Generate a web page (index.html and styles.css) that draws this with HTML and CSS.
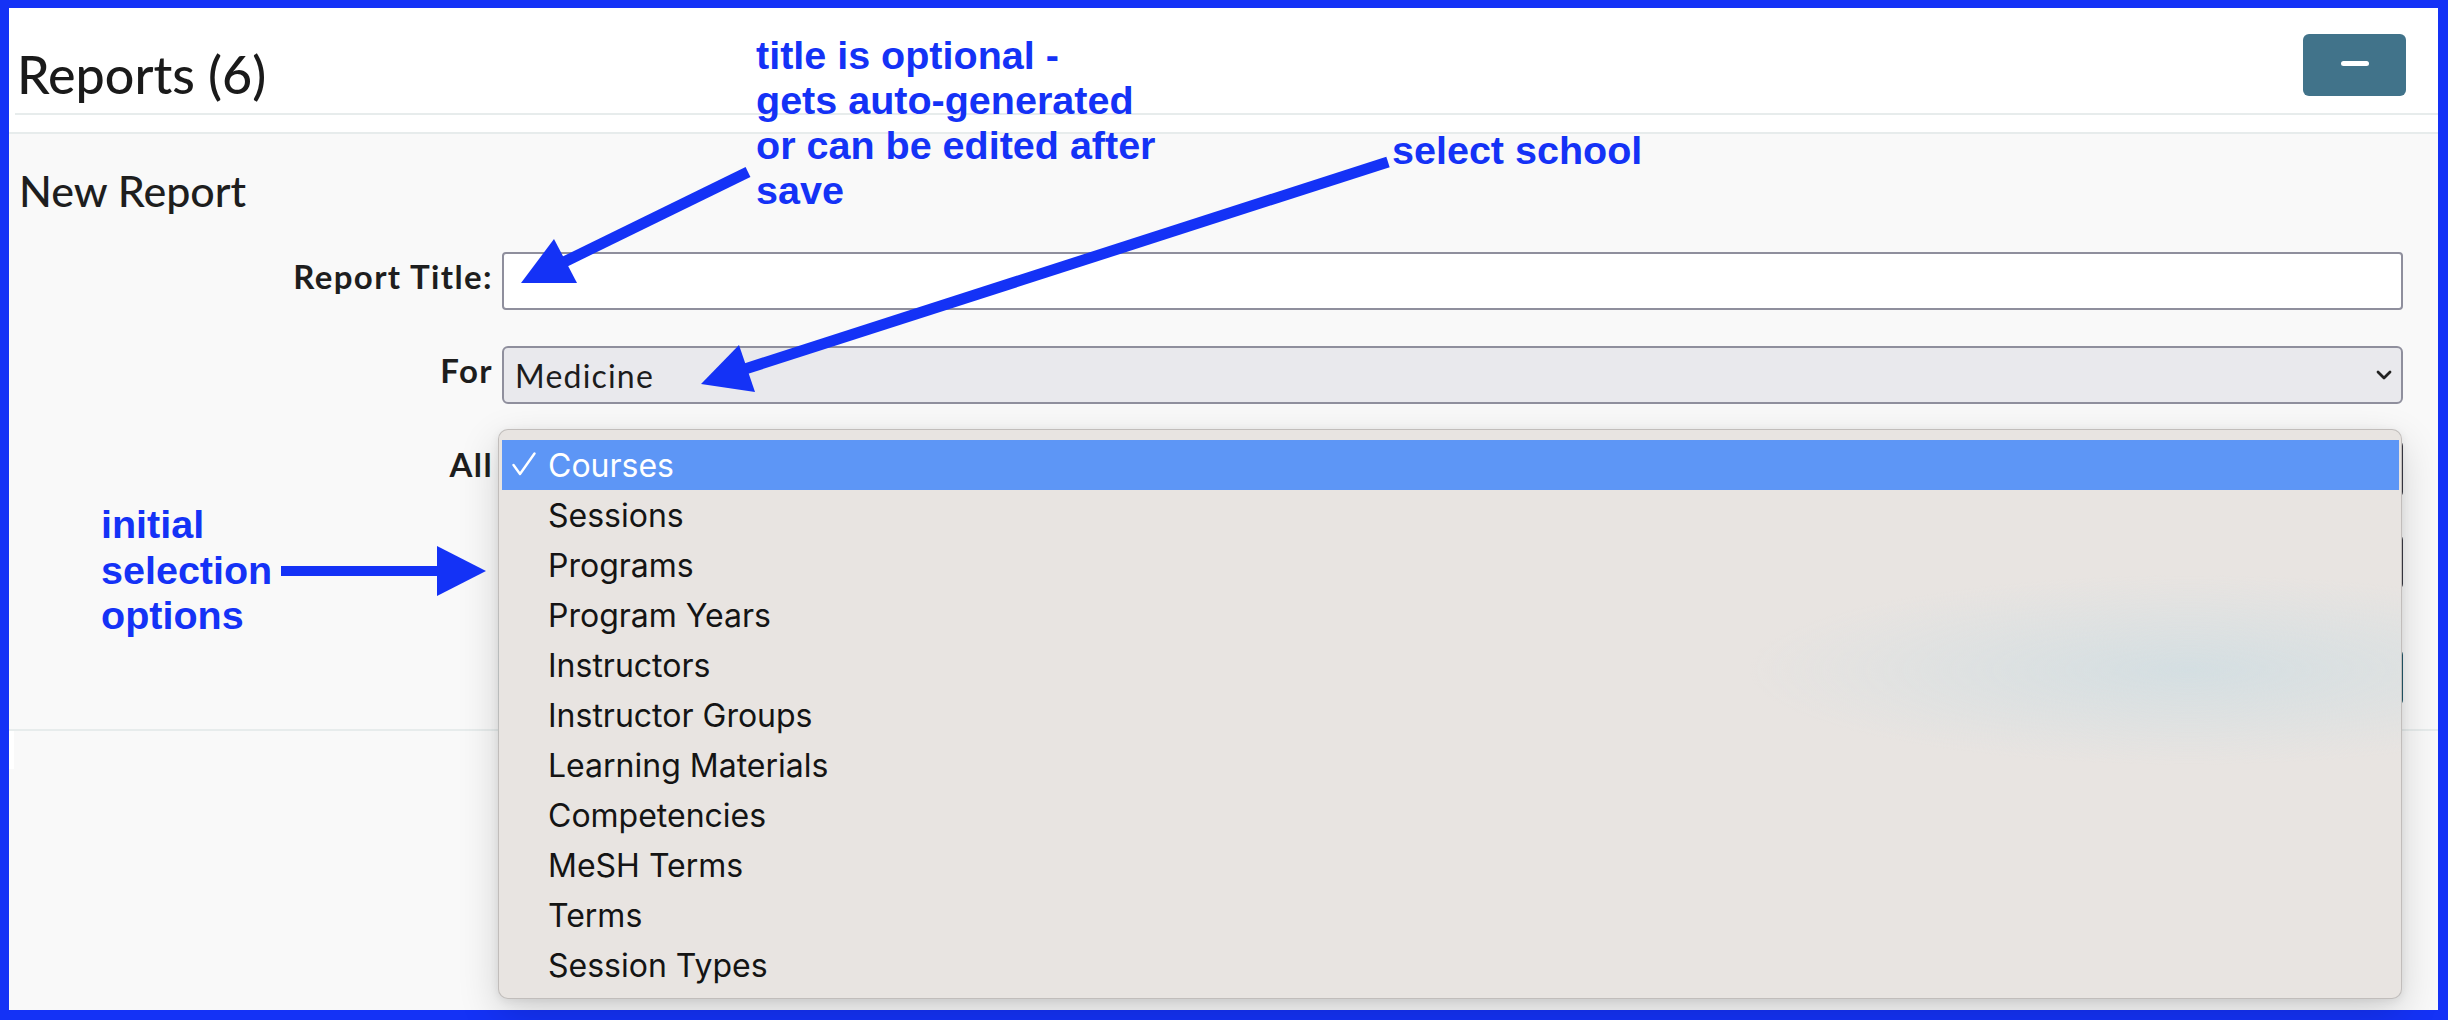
FILE: index.html
```html
<!DOCTYPE html>
<html lang="en">
<head>
<meta charset="utf-8">
<title>Reports</title>
<link rel="stylesheet" href="styles.css">
</head>
<body>
<div class="frame">
  <header class="head">
    <h1 class="title">Reports (6)</h1>
    <button class="collapse" type="button" aria-label="Collapse"><span class="minus"></span></button>
  </header>

  <section class="new-report">
    <h2 class="sub">New Report</h2>
    <div class="form">
      <label class="lbl">Report Title:</label>
      <div class="input"></div>

      <label class="lbl">For</label>
      <div class="select">
        <span class="val">Medicine</span>
        <svg class="chev" width="16" height="10" viewBox="0 0 16 10"><path d="M2 2 L8 8 L14 2" fill="none" stroke="#222" stroke-width="2.8" stroke-linecap="round" stroke-linejoin="round"/></svg>
      </div>

      <label class="lbl">All</label>
      <div class="field">
        <div class="select dark"></div>
        <div class="popup">
          <div class="opt sel"><span class="check"><svg width="24" height="24" viewBox="0 0 24 24"><path d="M1.5 13 L8 22 L22.5 1.5" fill="none" stroke="#fff" stroke-width="2.4" stroke-linecap="round" stroke-linejoin="round"/></svg></span>Courses</div>
          <div class="opt"><span class="check"></span>Sessions</div>
          <div class="opt"><span class="check"></span>Programs</div>
          <div class="opt"><span class="check"></span>Program Years</div>
          <div class="opt"><span class="check"></span>Instructors</div>
          <div class="opt"><span class="check"></span>Instructor Groups</div>
          <div class="opt"><span class="check"></span>Learning Materials</div>
          <div class="opt"><span class="check"></span>Competencies</div>
          <div class="opt"><span class="check"></span>MeSH Terms</div>
          <div class="opt"><span class="check"></span>Terms</div>
          <div class="opt"><span class="check"></span>Session Types</div>
        </div>
      </div>

      <span></span>
      <div class="select dark sel2"></div>

      <span></span>
      <div class="btn-row"><button class="done" type="button"></button></div>
    </div>
  </section>

  <div class="gap"></div>
  <div class="list"></div>

  <p class="note n1">title is optional -<br>gets auto-generated<br>or can be edited after<br>save</p>
  <p class="note n2">select school</p>
  <p class="note n3">initial<br>selection<br>options</p>

  <svg class="arrows" width="2448" height="1020" viewBox="0 0 2448 1020">
    <line x1="748" y1="172" x2="564" y2="262" stroke="#1432f6" stroke-width="11"/>
    <polygon points="521,283 554,239 577,283" fill="#1432f6"/>
    <line x1="1388" y1="162" x2="745" y2="369" stroke="#1432f6" stroke-width="11"/>
    <polygon points="701,384 739,345 755,392" fill="#1432f6"/>
    <line x1="281" y1="571" x2="440" y2="571" stroke="#1432f6" stroke-width="10"/>
    <polygon points="437,546 486,571 437,596" fill="#1432f6"/>
  </svg>
</div>
</body>
</html>
```

FILE: styles.css
```css
html, body {
  margin: 0;
  background: #1432f6;
}
body {
  height: 1020px;
  overflow: hidden;
  font-family: Lato, "Open Sans", sans-serif;
  color: #1e1e1e;
}
.frame {
  position: relative;
  margin: 8px 10px 0 9px;
  height: 1002px;
  background: #fff;
  display: flex;
  flex-direction: column;
}
.head {
  flex: none;
  display: flex;
  justify-content: space-between;
  align-items: flex-start;
  height: 105px;
  margin-left: 6px;
  border-bottom: 2px solid #e7ecec;
}
.title {
  margin: 35px 0 0 2px;
  font-size: 52px;
  line-height: 62px;
  font-weight: 500;
  color: #1a1a1a;
}
.collapse {
  margin: 26px 32px 0 0;
  width: 103px;
  height: 62px;
  border: 0;
  border-radius: 6px;
  background: #41738a;
  display: flex;
  align-items: center;
  justify-content: center;
  padding: 0;
}
.minus {
  width: 28px;
  height: 5px;
  border-radius: 3px;
  background: #fff;
  margin-top: -4px;
}
.new-report {
  flex: none;
  margin-top: 17px;
  border-top: 2px solid #e7ecec;
  border-bottom: 2px solid #e7ecec;
  background: #f9f9f9;
  padding: 0 35px 23px 10px;
}
.sub {
  margin: 31px 0 0;
  font-size: 43px;
  line-height: 52px;
  font-weight: 500;
}
.form {
  display: grid;
  grid-template-columns: 473px 1fr;
  column-gap: 10px;
  row-gap: 36px;
  margin-top: 35px;
}
.lbl {
  font-weight: 700;
  font-size: 33px;
  letter-spacing: 1.4px;
  line-height: 38px;
  text-align: right;
  padding-top: 5px;
  margin-right: -1px;
}
.input {
  height: 58px;
  box-sizing: border-box;
  border: 2px solid #8f8f9d;
  border-radius: 4px;
  background: #fff;
}
.select {
  height: 58px;
  box-sizing: border-box;
  border: 2px solid #8f8f9d;
  border-radius: 6px;
  background: #e9e9ed;
  display: flex;
  align-items: center;
  justify-content: space-between;
  padding: 0 9px 0 11px;
  font-size: 32px;
  color: #1c1c1c;
}
.val {
  letter-spacing: 1.2px;
}
.chev {
  display: block;
}
.select.dark {
  border-color: #3c3c46;
}
.sel2 {
  height: 56px;
}
.field {
  position: relative;
}
.btn-row {
  display: flex;
  justify-content: flex-end;
  margin-top: 23px;
}
.done {
  width: 240px;
  height: 57px;
  border: 0;
  border-radius: 6px;
  background: #245a6c;
}
.popup {
  position: absolute;
  z-index: 2;
  top: -11px;
  left: -4px;
  right: 1px;
  padding: 10px 2px 8px 3px;
  border: 1px solid rgba(0, 0, 0, 0.17);
  border-radius: 10px;
  background:
    radial-gradient(ellipse 440px 95px at 1690px 240px, rgba(210, 222, 226, 0.9), rgba(232, 228, 225, 0) 100%),
    #e8e4e1;
  box-shadow: 0 14px 40px rgba(0, 0, 0, 0.16), 0 2px 8px rgba(0, 0, 0, 0.08);
  font-family: Inter, "Liberation Sans", sans-serif;
}
.opt {
  height: 50px;
  display: flex;
  align-items: center;
  padding-left: 10px;
  font-size: 32px;
  color: #141414;
}
.opt.sel {
  background: #5d96f6;
  color: #fff;
}
.check {
  display: flex;
  align-items: center;
  width: 36px;
  height: 24px;
  margin-top: -2px;
}
.check svg {
  display: block;
}
.gap {
  flex: none;
  height: 38px;
  background: #f9f9f9;
  border-left: 5px solid #fff;
}
.list {
  flex: 1;
  background: #f9f9f9;
}
.note {
  position: absolute;
  z-index: 3;
  margin: 0;
  font-family: "Liberation Sans", Arial, sans-serif;
  font-weight: 700;
  font-size: 39.5px;
  line-height: 45px;
  color: #1432f6;
  white-space: nowrap;
}
.n1 { left: 747px; top: 25px; }
.n2 { left: 1383px; top: 120px; }
.n3 { left: 92px; top: 494px; line-height: 45.5px; }
.arrows {
  position: absolute;
  z-index: 3;
  left: -9px;
  top: -8px;
  pointer-events: none;
}
```
